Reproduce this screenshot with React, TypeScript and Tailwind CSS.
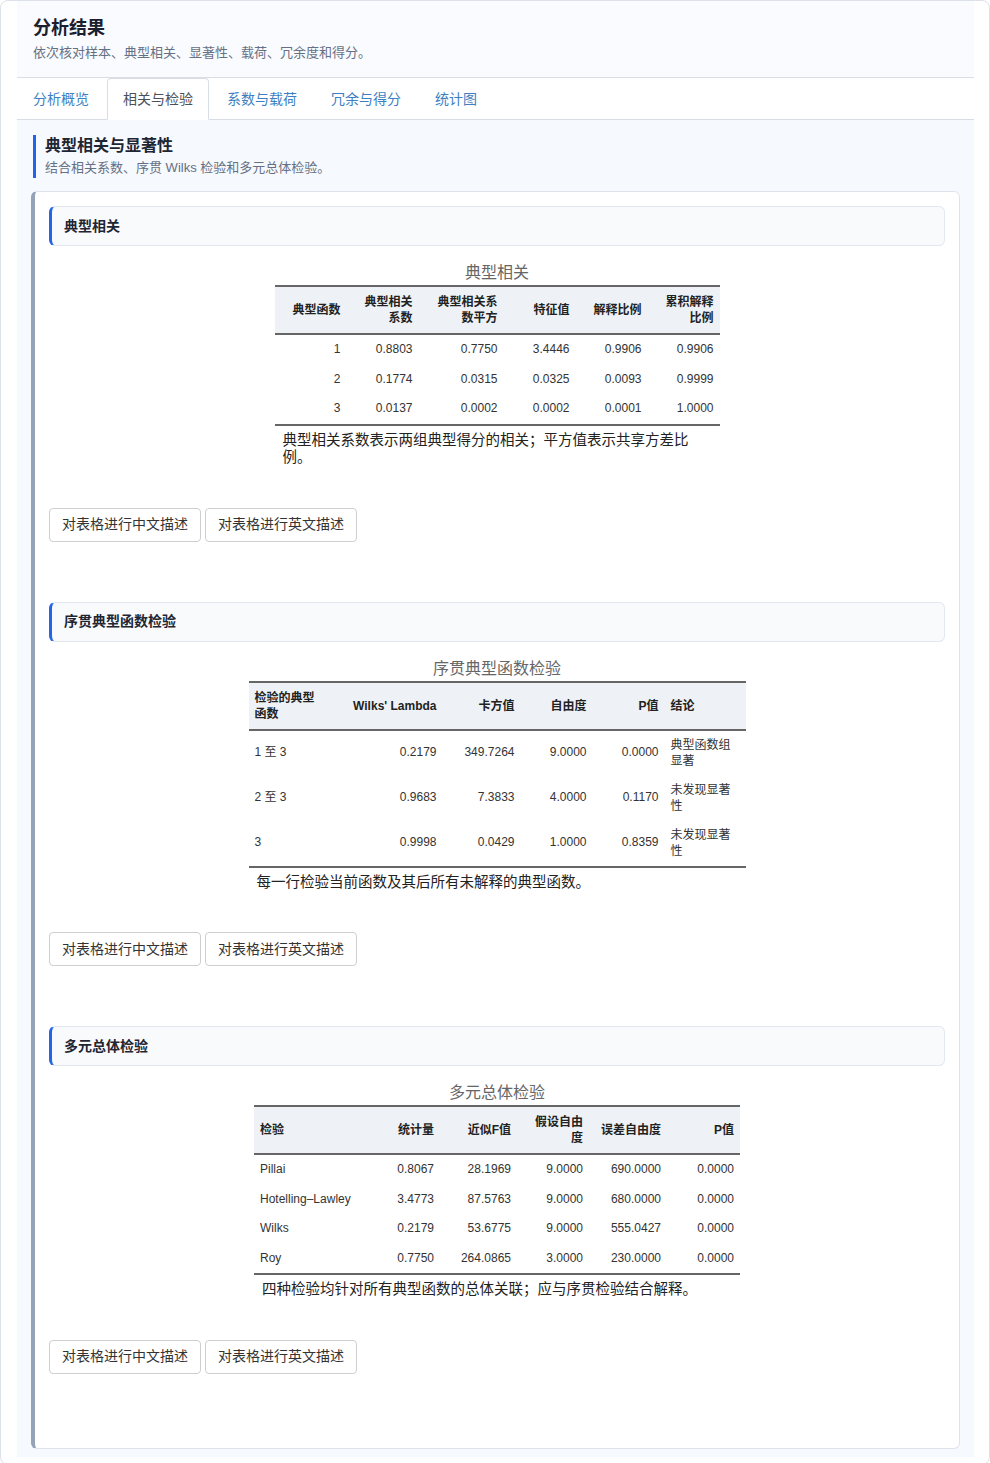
import React from "react";

type Col = { w: number; align: "left" | "right"; tight?: boolean };

type TableSpec = {
    caption: string;
    width: number;
    cols: Col[];
    head: React.ReactNode[];
    rows: string[][];
    note: string;
};

const TABLES: { title: string; table: TableSpec }[] = [
    {
        title: "典型相关",
        table: {
            caption: "典型相关",
            width: 445,
            cols: [
                { w: 72, align: "right" },
                { w: 72, align: "right" },
                { w: 85, align: "right" },
                { w: 72, align: "right" },
                { w: 72, align: "right" },
                { w: 72, align: "right" },
            ],
            head: [
                "典型函数",
                <>典型相关<br />系数</>,
                <>典型相关系<br />数平方</>,
                "特征值",
                "解释比例",
                <>累积解释<br />比例</>,
            ],
            rows: [
                ["1", "0.8803", "0.7750", "3.4446", "0.9906", "0.9906"],
                ["2", "0.1774", "0.0315", "0.0325", "0.0093", "0.9999"],
                ["3", "0.0137", "0.0002", "0.0002", "0.0001", "1.0000"],
            ],
            note: "典型相关系数表示两组典型得分的相关；平方值表示共享方差比例。",
        },
    },
    {
        title: "序贯典型函数检验",
        table: {
            caption: "序贯典型函数检验",
            width: 497,
            cols: [
                { w: 82, align: "left" },
                { w: 112, align: "right" },
                { w: 78, align: "right" },
                { w: 72, align: "right" },
                { w: 72, align: "right" },
                { w: 81, align: "left", tight: true },
            ],
            head: [
                <>检验的典型<br />函数</>,
                "Wilks' Lambda",
                "卡方值",
                "自由度",
                "P值",
                "结论",
            ],
            rows: [
                ["1 至 3", "0.2179", "349.7264", "9.0000", "0.0000", "典型函数组显著"],
                ["2 至 3", "0.9683", "7.3833", "4.0000", "0.1170", "未发现显著性"],
                ["3", "0.9998", "0.0429", "1.0000", "0.8359", "未发现显著性"],
            ],
            note: "每一行检验当前函数及其后所有未解释的典型函数。",
        },
    },
    {
        title: "多元总体检验",
        table: {
            caption: "多元总体检验",
            width: 486,
            cols: [
                { w: 116, align: "left" },
                { w: 70, align: "right" },
                { w: 77, align: "right" },
                { w: 72, align: "right" },
                { w: 78, align: "right" },
                { w: 73, align: "right" },
            ],
            head: [
                "检验",
                "统计量",
                "近似F值",
                <>假设自由<br />度</>,
                "误差自由度",
                "P值",
            ],
            rows: [
                ["Pillai", "0.8067", "28.1969", "9.0000", "690.0000", "0.0000"],
                ["Hotelling–Lawley", "3.4773", "87.5763", "9.0000", "680.0000", "0.0000"],
                ["Wilks", "0.2179", "53.6775", "9.0000", "555.0427", "0.0000"],
                ["Roy", "0.7750", "264.0865", "3.0000", "230.0000", "0.0000"],
            ],
            note: "四种检验均针对所有典型函数的总体关联；应与序贯检验结合解释。",
        },
    },
];

const TABS = ["分析概览", "相关与检验", "系数与载荷", "冗余与得分", "统计图"];

function StatTable({ spec }: { spec: TableSpec }) {
    return (
        <div className="mx-auto" style={{ width: spec.width }}>
            <div className="pb-[1px] text-center text-[16px] leading-[22px] text-[#666]">{spec.caption}</div>
            <table className="w-full table-fixed border-collapse text-[12px]">
                <colgroup>
                    {spec.cols.map((c, i) => (
                        <col key={i} style={{ width: c.w }} />
                    ))}
                </colgroup>
                <thead>
                    <tr className="border-t-2 border-b-2 border-[#666] bg-[#eef2f7]">
                        {spec.head.map((h, i) => (
                            <th
                                key={i}
                                className={`px-[6px] py-[7px] leading-[16px] font-bold text-[#222] align-middle ${spec.cols[i].align === "left" ? "text-left" : "text-right"
                                    }`}
                            >
                                {h}
                            </th>
                        ))}
                    </tr>
                </thead>
                <tbody>
                    {spec.rows.map((r, ri) => (
                        <tr
                            key={ri}
                            className={ri === spec.rows.length - 1 ? "border-b-2 border-[#666]" : ""}
                        >
                            {r.map((v, ci) => (
                                <td
                                    key={ci}
                                    className={`px-[6px] py-[6px] text-[#333] align-middle ${spec.cols[ci].tight ? "leading-[16.5px]" : "leading-[17.5px]"
                                        } ${spec.cols[ci].align === "left" ? "text-left" : "text-right"}`}
                                >
                                    {v}
                                </td>
                            ))}
                        </tr>
                    ))}
                </tbody>
            </table>
            <div className="px-[8px] pt-[6px] pb-[6px] text-[14.5px] leading-[17.5px] text-[#222]">
                {spec.note}
            </div>
        </div>
    );
}

export default function App() {
    return (
        <div
            className="w-[990px] min-h-[1463px] bg-white"
            style={{ fontFamily: '"Liberation Sans", "Noto Sans CJK SC", sans-serif' }}
        >
            <div className="min-h-[1463px] border border-[#dde2ea] rounded-[8px] pl-[16px] pr-[15px] pb-[7px] flex flex-col">
                {/* header */}
                <div className="bg-[#f9fbfe] px-4 pt-[14px] pb-[14px] border-b border-[#d9dee6]">
                    <h1 className="text-[18px] leading-[26px] font-bold text-[#1a2030]">分析结果</h1>
                    <p className="mt-[2px] text-[13px] leading-[20px] text-[#667085]">
                        依次核对样本、典型相关、显著性、载荷、冗余度和得分。
                    </p>
                </div>

                {/* tabs */}
                <div className="flex border-b border-[#d9dee6]">
                    {TABS.map((t, i) => (
                        <div
                            key={t}
                            className={`h-[42px] -mb-px mr-[2px] px-[15px] text-[14px] leading-[40px] rounded-t-[4px] border ${i === 1
                                ? "bg-white border-[#d9dee6] border-b-white text-[#4b5058]"
                                : "border-transparent text-[#3d7fc2]"
                                }`}
                        >
                            {t}
                        </div>
                    ))}
                </div>

                {/* content */}
                <div className="flex-1 bg-[#f6f9fd] px-[14px] pt-[15px] pb-[8px]">
                    <div className="mx-[2px] border-l-[3px] border-[#2563eb] pl-[9px]">
                        <h2 className="text-[16px] leading-[22px] font-bold text-[#1e2533]">典型相关与显著性</h2>
                        <p className="text-[13px] leading-[21px] text-[#667085]">
                            结合相关系数、序贯 Wilks 检验和多元总体检验。
                        </p>
                    </div>

                    <div className="mt-[13px] bg-white border border-[#dde3ec] border-l-4 border-l-[#94a3b8] rounded-[6px] pl-[14px] pr-[14px] pt-[14px] pb-[14px]">
                        {TABLES.map((b) => (
                            <div key={b.title} className="pb-[60px]">
                                <div className="h-[40px] flex items-center bg-[#f8fafc] border border-[#e2e8f0] border-l-[3px] border-l-[#2563eb] rounded-[6px] pl-[12px] text-[14px] font-bold text-[#1f2633]">
                                    {b.title}
                                </div>
                                <div className="mt-[16px]">
                                    <StatTable spec={b.table} />
                                </div>
                                <div className="mt-[35px] flex gap-[4px]">
                                    <button className="h-[34px] px-[12px] bg-white border border-[#cfcfcf] rounded-[4px] text-[14px] text-[#333]">
                                        对表格进行中文描述
                                    </button>
                                    <button className="h-[34px] px-[12px] bg-white border border-[#cfcfcf] rounded-[4px] text-[14px] text-[#333]">
                                        对表格进行英文描述
                                    </button>
                                </div>
                            </div>
                        ))}
                    </div>
                </div>
            </div>
        </div>
    );
}
